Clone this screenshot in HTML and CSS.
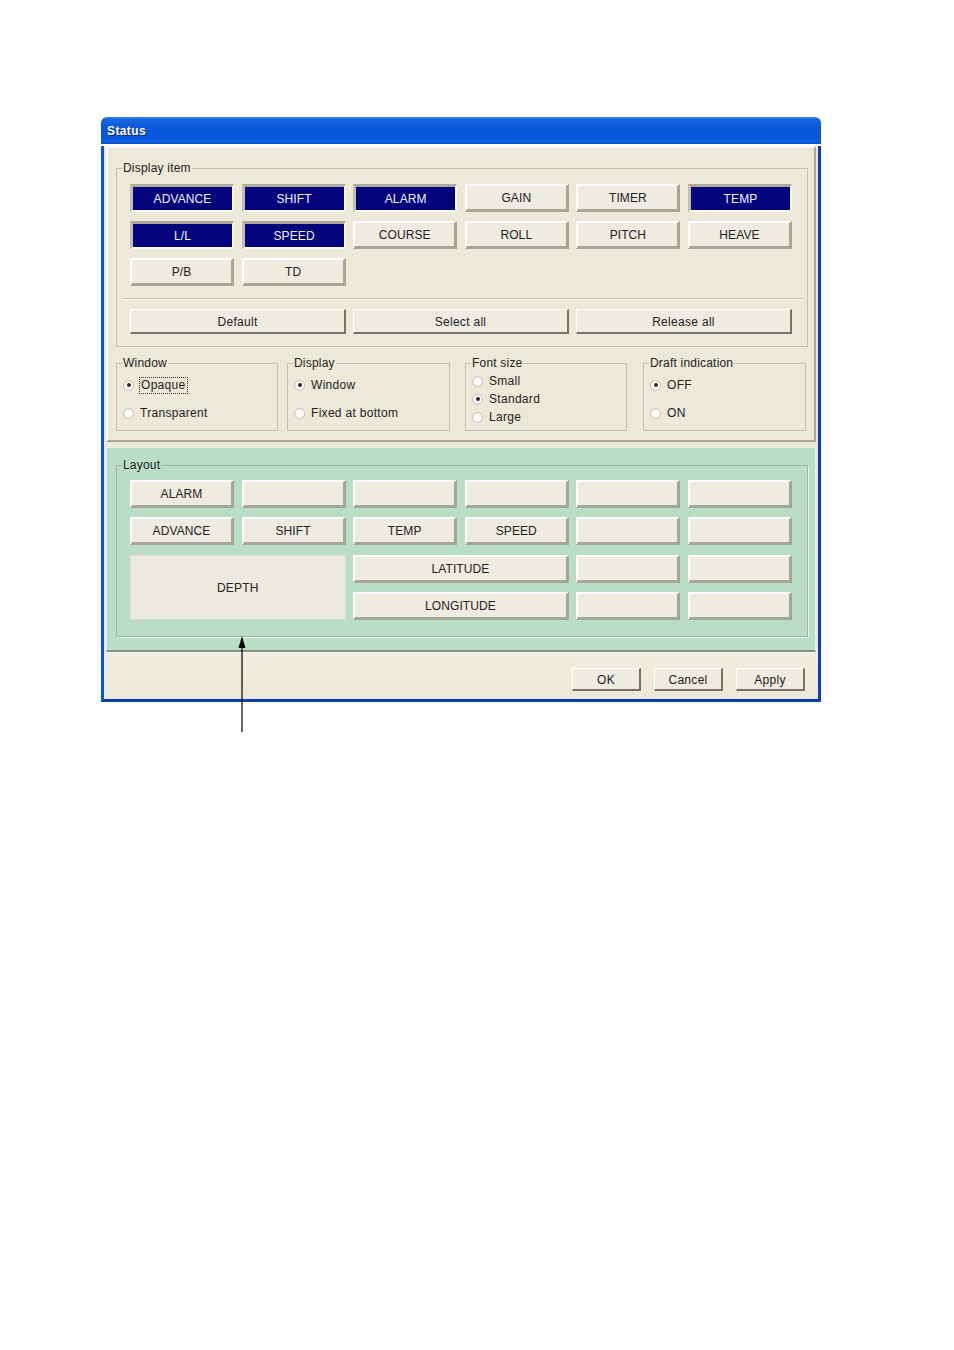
FILE: index.html
```html
<!DOCTYPE html>
<html>
<head>
<meta charset="utf-8">
<title>Status</title>
<link rel="stylesheet" href="styles.css">
</head>
<body>
<div class="page">
  <div class="window">
    <div class="titlebar">Status</div>
    <div class="frame">
      <div class="panel panel-top">
        <fieldset class="group group-main">
          <legend>Display item</legend>
          <div class="group-inner">
            <div class="grid6">
              <div class="btn sel">ADVANCE</div>
              <div class="btn sel">SHIFT</div>
              <div class="btn sel">ALARM</div>
              <div class="btn">GAIN</div>
              <div class="btn">TIMER</div>
              <div class="btn sel">TEMP</div>
              <div class="btn sel">L/L</div>
              <div class="btn sel">SPEED</div>
              <div class="btn">COURSE</div>
              <div class="btn">ROLL</div>
              <div class="btn">PITCH</div>
              <div class="btn">HEAVE</div>
              <div class="btn">P/B</div>
              <div class="btn">TD</div>
            </div>
            <div class="sep"></div>
            <div class="grid3">
              <div class="pbtn">Default</div>
              <div class="pbtn">Select all</div>
              <div class="pbtn">Release all</div>
            </div>
          </div>
        </fieldset>
        <div class="opts">
          <fieldset class="group opt w162 spaced">
            <legend>Window</legend>
            <div class="radio on"><span class="dot"></span><span class="focus">Opaque</span></div>
            <div class="radio"><span class="dot"></span><span>Transparent</span></div>
          </fieldset>
          <fieldset class="group opt w163 spaced gap9">
            <legend>Display</legend>
            <div class="radio on"><span class="dot"></span><span>Window</span></div>
            <div class="radio"><span class="dot"></span><span>Fixed at bottom</span></div>
          </fieldset>
          <fieldset class="group opt w162 tight gap15">
            <legend>Font size</legend>
            <div class="radio"><span class="dot"></span><span>Small</span></div>
            <div class="radio on"><span class="dot"></span><span>Standard</span></div>
            <div class="radio"><span class="dot"></span><span>Large</span></div>
          </fieldset>
          <fieldset class="group opt w163 spaced gap16">
            <legend>Draft indication</legend>
            <div class="radio on"><span class="dot"></span><span>OFF</span></div>
            <div class="radio"><span class="dot"></span><span>ON</span></div>
          </fieldset>
        </div>
      </div>
      <div class="panel panel-layout">
        <fieldset class="group group-layout">
          <legend>Layout</legend>
          <div class="layout-inner">
            <div class="layout-grid">
              <div class="btn">ALARM</div>
              <div class="btn"></div>
              <div class="btn"></div>
              <div class="btn"></div>
              <div class="btn"></div>
              <div class="btn"></div>
              <div class="btn">ADVANCE</div>
              <div class="btn">SHIFT</div>
              <div class="btn">TEMP</div>
              <div class="btn">SPEED</div>
              <div class="btn"></div>
              <div class="btn"></div>
              <div class="depth">DEPTH</div>
              <div class="btn wide">LATITUDE</div>
              <div class="btn"></div>
              <div class="btn"></div>
              <div class="btn wide">LONGITUDE</div>
              <div class="btn"></div>
              <div class="btn"></div>
            </div>
          </div>
        </fieldset>
      </div>
      <div class="footer">
        <div class="fbtn">OK</div>
        <div class="fbtn">Cancel</div>
        <div class="fbtn">Apply</div>
      </div>
    </div>
  </div>
  <svg class="arrow" width="12" height="96" viewBox="0 0 12 96">
    <line x1="6" y1="8" x2="6" y2="96" stroke="#000" stroke-width="1.2"/>
    <polygon points="6,0 2.5,12 9.5,12" fill="#000"/>
  </svg>
</div>
</body>
</html>
```
FILE: styles.css
```css
html, body {
  margin: 0;
  padding: 0;
  background: #ffffff;
}

.page {
  position: relative;
  width: 954px;
  height: 1350px;
  box-sizing: border-box;
  padding: 117px 0 0 101px;
  font-family: "Liberation Sans", Arial, sans-serif;
  font-size: 12px;
  color: #1f1f1f;
}

.window {
  width: 720px;
}

.titlebar {
  height: 27px;
  box-sizing: border-box;
  padding: 8px 0 0 6px;
  background: linear-gradient(#3d84ee 0%, #1565e0 10%, #0a57d8 40%, #0856dc 75%, #0d5fe6 90%, #0a4fc8 100%);
  border-radius: 6px 6px 0 0;
  color: #ffffff;
  font-weight: bold;
  font-size: 12px;
  letter-spacing: 0.4px;
  line-height: 13px;
  text-shadow: 1px 1px 0 #0a2a7a;
}

.frame {
  background: #ece9d8;
  border-left: 3px solid #0b55dc;
  border-right: 3px solid #0a3fb8;
  border-bottom: 3px solid #0a3db0;
  box-sizing: border-box;
}

.panel {
  margin: 0 2px;
  box-sizing: border-box;
}

.panel-top {
  margin-top: 2px;
  height: 296px;
  padding: 13px 0 0 0;
  border: 2px solid;
  border-color: #fbfaf5 #aca899 #aca899 #fbfaf5;
  background: #ece9d8;
}

.group {
  margin: 0;
  padding: 0;
  min-width: 0;
  border: 1px solid #c4c1b1;
  box-sizing: border-box;
}

.group legend {
  margin-left: 5px;
  padding: 0 1px;
  line-height: 15px;
  font-size: 12px;
  color: #222;
  letter-spacing: 0.2px;
}

.group-main {
  margin-left: 8px;
  width: 692px;
}

.group-inner {
  padding: 8px 13px 12px 13px;
}

.grid6 {
  display: grid;
  grid-template-columns: repeat(6, 104px);
  grid-auto-rows: 28px;
  column-gap: 7.6px;
  row-gap: 9px;
}

.btn {
  display: flex;
  align-items: center;
  justify-content: center;
  box-sizing: border-box;
  height: 28px;
  padding-top: 1px;
  background: #eeebe1;
  border-style: solid;
  border-width: 2px 3px 3px 2px;
  border-color: #ffffff #a8a596 #a8a596 #ffffff;
  color: #222;
  font-size: 12px;
  letter-spacing: 0.1px;
}

.btn.sel {
  background: #03037c;
  color: #f4f4ff;
  border-width: 3px 2px 2px 3px;
  border-color: #aeab9d #f9f8f3 #f9f8f3 #c2bfb1;
}

.sep {
  margin: 12px -8px 0 -8px;
  height: 0;
  border-top: 1px solid #c4c1b1;
  border-bottom: 1px solid #ffffff;
}

.grid3 {
  margin-top: 9px;
  display: grid;
  grid-template-columns: repeat(3, 216px);
  column-gap: 7px;
}

.pbtn, .fbtn {
  display: flex;
  align-items: center;
  justify-content: center;
  box-sizing: border-box;
  height: 25px;
  padding-top: 2px;
  background: #eeebe1;
  border-style: solid;
  border-width: 1px 2px 2px 1px;
  border-color: #ffffff #76746a #76746a #ffffff;
  color: #222;
  font-size: 12px;
  letter-spacing: 0.3px;
}

.opts {
  display: flex;
  margin: 9px 8px 0 8px;
}

.opt {
  height: 75px;
}

.gap9 { margin-left: 9px; }
.gap15 { margin-left: 15px; }
.gap16 { margin-left: 16px; }

.w162 { width: 162px; }
.w163 { width: 163px; }

.spaced {
  padding-top: 5px;
}

.spaced .radio + .radio {
  margin-top: 10px;
}

.tight {
  padding-top: 1px;
}

.radio {
  display: flex;
  align-items: center;
  height: 18px;
  padding-left: 6px;
  font-size: 12px;
  color: #222;
  letter-spacing: 0.3px;
}

.dot {
  flex: none;
  width: 9px;
  height: 9px;
  margin-right: 6px;
  border-radius: 50%;
  border: 1px solid #c4c1b3;
  background: radial-gradient(circle at 60% 60%, #ffffff 40%, #e6e4da 100%);
  display: flex;
  align-items: center;
  justify-content: center;
}

.radio.on .dot::after {
  content: "";
  width: 4px;
  height: 4px;
  border-radius: 50%;
  background: #2a2a2a;
}

.focus {
  outline: 1px dotted #333;
  outline-offset: 0;
  padding: 0 1px;
  line-height: 15px;
}

.panel-layout {
  margin-top: 5px;
  height: 205px;
  padding-top: 10px;
  background: #badec5;
  border-style: solid;
  border-width: 1px 1px 2px 1px;
  border-color: #e2f1e6 #e8f4eb #8e8b7e #e2f1e6;
}

.group-layout {
  margin-left: 9px;
  width: 692px;
  border-color: #9fb8a6;
  box-shadow: 1px 1px 0 #e4f2e8;
}

.layout-inner {
  padding: 7px 13px 16px 13px;
}

.layout-grid {
  display: grid;
  grid-template-columns: repeat(6, 104px);
  grid-template-rows: repeat(4, 28px);
  column-gap: 7.6px;
  row-gap: 9.33px;
}

.layout-grid .wide {
  grid-column: span 2;
}

.depth {
  grid-column: 1 / 3;
  grid-row: 3 / 5;
  display: flex;
  align-items: center;
  justify-content: center;
  background: #ece9df;
  border: 1px solid #dedbd0;
  color: #222;
  font-size: 12px;
  letter-spacing: 0.2px;
  padding-top: 2px;
}

.footer {
  display: flex;
  justify-content: flex-end;
  gap: 13px;
  border-top: 1px solid #ffffff;
  padding: 15px 13px 8px 0;
  background: linear-gradient(#f0eee2, #ece9d8);
}

.fbtn {
  width: 69px;
  height: 23px;
}

.arrow {
  position: absolute;
  left: 236px;
  top: 636px;
}
```
